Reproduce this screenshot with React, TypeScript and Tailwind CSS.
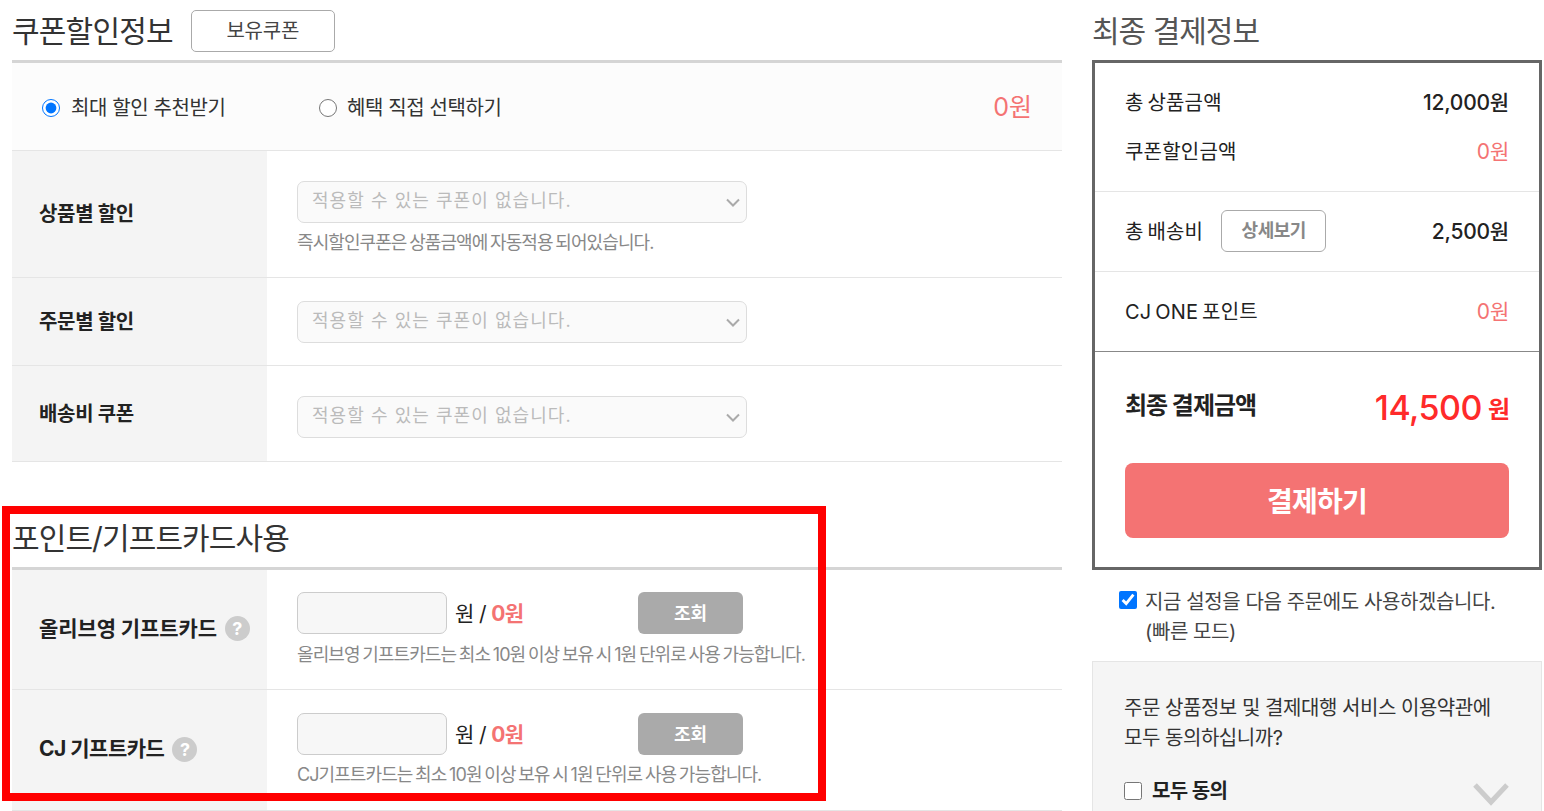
function Won({ children, className = "" }: { children: React.ReactNode; className?: string }) {
  return <span className={`whitespace-nowrap ${className}`}>{children}</span>;
}

const helpText = "text-[18px] leading-[24px] tracking-[-0.92px] [word-spacing:-1.45px] text-[#888888] whitespace-nowrap";

function SelectBox() {
  return (
    <div className="w-[450px] h-[42px] flex items-center justify-between pl-[14px] pr-[6px] bg-[#fafafa] border border-[#dddddd] rounded-[7px] text-[18px] tracking-[1.05px] text-[#bbbbbb]">
      <span className="pb-[3px]">적용할 수 있는 쿠폰이 없습니다.</span>
      <svg width="14" height="9" viewBox="0 0 14 9" fill="none">
        <path d="M1 1.5 L7 7.5 L13 1.5" stroke="#aaaaaa" strokeWidth="2" />
      </svg>
    </div>
  );
}

function CouponRow({ label, height, help, pad }: { label: string; height: string; help?: string; pad: string }) {
  return (
    <div className={`flex border-b border-[#e5e5e5] ${height}`}>
      <div className="w-[255px] shrink-0 bg-[#f4f4f4] pl-[27px] flex items-center text-[20px] font-bold tracking-[-0.3px] text-[#222222]">
        {label}
      </div>
      <div className={`pl-[30px] ${pad}`}>
        <SelectBox />
        {help && <p className={`mt-[8px] ${helpText}`}>{help}</p>}
      </div>
    </div>
  );
}

function HelpDot() {
  return (
    <span className="ml-[8px] w-[25px] h-[25px] rounded-full bg-[#cccccc] text-white text-[18px] font-bold flex items-center justify-center">
      ?
    </span>
  );
}

function GiftRow({ label, help, height, top, helpGap, tracking }: { label: string; help: string; height: string; top: string; helpGap: string; tracking: string }) {
  return (
    <div className={`flex border-b border-[#e5e5e5] ${height}`}>
      <div className={`w-[255px] shrink-0 bg-[#f4f4f4] pl-[27px] pb-[2px] flex items-center text-[21px] font-bold text-[#222222] ${tracking}`}>
        {label}
        <HelpDot />
      </div>
      <div className={`pl-[30px] ${top}`}>
        <div className="flex items-center h-[42px]">
          <div className="w-[150px] h-[42px] bg-[#f7f7f7] border border-[#cccccc] rounded-[7px]" />
          <span className="ml-[8px] w-[183px] pt-[1px] text-[21px] tracking-[-0.6px] text-[#222222]">
            원 / <b className="font-bold text-[#f47373]">0원</b>
          </span>
          <button className="w-[105px] h-[42px] bg-[#aaaaaa] rounded-[6px] text-white text-[18px] font-bold">조회</button>
        </div>
        <p className={`${helpGap} ${helpText}`}>{help}</p>
      </div>
    </div>
  );
}

function SummaryRow({ label, value, red }: { label: string; value: string; red?: boolean }) {
  return (
    <div className="flex items-center justify-between h-[49px] text-[#222222]">
      <span className="text-[20px] tracking-[0.2px] [word-spacing:-2px]">{label}</span>
      <Won className={`text-[21px] tracking-[-0.2px] ${red ? "text-[#f47373]" : "font-medium"}`}>{value}</Won>
    </div>
  );
}

export default function App() {
  return (
    <div className="relative h-[811px] overflow-hidden bg-white font-['Inter','Noto_Sans_CJK_KR',sans-serif]">
      <div className="flex items-start pl-[12px] pr-[2px] gap-[30px]">
        {/* Left column */}
        <div className="w-[1050px] shrink-0">
          <div className="flex items-center h-[60px]">
            <h2 className="pt-[2px] text-[30px] tracking-[-0.8px] text-[#333333]">쿠폰할인정보</h2>
            <button className="ml-[18px] mt-[2px] w-[144px] h-[42px] border border-[#aaaaaa] rounded-[5px] text-[20px] tracking-[-0.2px] text-[#444444]">보유쿠폰</button>
          </div>
          <div className="h-[3px] bg-[#d5d5d5]" />
          <div className="flex items-center justify-between h-[88px] pl-[30px] pr-[30px] pt-[3px] bg-[#fcfcfc] border-b border-[#e5e5e5] text-[20px] tracking-[-0.4px] text-[#333333]">
            <div className="flex items-center">
              <label className="flex items-center w-[277px] gap-[11px]">
                <input type="radio" name="sale" defaultChecked className="w-[18px] h-[18px] m-0" />
                최대 할인 추천받기
              </label>
              <label className="flex items-center gap-[10px]">
                <input type="radio" name="sale" className="w-[18px] h-[18px] m-0" />
                혜택 직접 선택하기
              </label>
            </div>
            <span className="text-[25px] tracking-normal text-[#f47373]">0원</span>
          </div>
          <CouponRow label="상품별 할인" height="h-[127px]" pad="pt-[30px]" help="즉시할인쿠폰은 상품금액에 자동적용 되어있습니다." />
          <CouponRow label="주문별 할인" height="h-[88px]" pad="pt-[23px]" />
          <CouponRow label="배송비 쿠폰" height="h-[96px]" pad="pt-[30px]" />

          <h2 className="mt-[52px] h-[53px] pb-[4px] flex items-center text-[30px] tracking-[-0.9px] text-[#333333]">포인트/기프트카드사용</h2>
          <div className="h-[3px] bg-[#d5d5d5]" />
          <GiftRow label="올리브영 기프트카드" height="h-[120px]" top="pt-[22px]" helpGap="mt-[9px]" tracking="tracking-[-0.1px]" help="올리브영 기프트카드는 최소 10원 이상 보유 시 1원 단위로 사용 가능합니다." />
          <GiftRow label="CJ 기프트카드" height="h-[121px]" top="pt-[23px]" helpGap="mt-[8px]" tracking="tracking-[-0.5px]" help="CJ기프트카드는 최소 10원 이상 보유 시 1원 단위로 사용 가능합니다." />
        </div>

        {/* Right column */}
        <div className="w-[450px] shrink-0">
          <h2 className="h-[60px] pt-[2px] flex items-center text-[30px] tracking-[-1px] text-[#555555]">최종 결제정보</h2>
          <div className="h-[510px] border-[3px] border-[#666666]">
            <div className="h-[129px] px-[30px] pt-[15px] border-b border-[#e5e5e5]">
              <SummaryRow label="총 상품금액" value="12,000원" />
              <SummaryRow label="쿠폰할인금액" value="0원" red />
            </div>
            <div className="h-[80px] px-[30px] flex items-center justify-between border-b border-[#e5e5e5] text-[#222222]">
              <div className="flex items-center">
                <span className="text-[20px] tracking-[0.2px] [word-spacing:-2px]">총 배송비</span>
                <button className="ml-[18px] mb-[2px] w-[105px] h-[42px] border border-[#aaaaaa] rounded-[6px] text-[18px] tracking-[-0.5px] font-bold text-[#888888]">상세보기</button>
              </div>
              <Won className="text-[21px] tracking-[-0.2px] font-medium">2,500원</Won>
            </div>
            <div className="h-[80px] px-[30px] flex items-center justify-between border-b border-[#888888] text-[#222222]">
              <span className="text-[20px] tracking-[0.2px] [word-spacing:-2px]">CJ ONE 포인트</span>
              <Won className="text-[21px] tracking-[-0.2px] text-[#f47373]">0원</Won>
            </div>
            <div className="px-[30px]">
              <div className="flex items-center justify-between h-[111px]">
                <span className="mb-[4px] text-[24px] font-bold tracking-[-1px] text-[#222222]">최종 결제금액</span>
                <Won className="text-[#ff2a2a] font-medium -mr-[1px]">
                  <span className="text-[34px] tracking-[-0.5px]">14,500</span>
                  <span className="ml-[6px] text-[24px] font-bold align-[2px]">원</span>
                </Won>
              </div>
              <button className="w-full h-[75px] pt-[2px] bg-[#f47373] rounded-[8px] text-white text-[28px] font-bold tracking-[-0.7px]">결제하기</button>
            </div>
          </div>

          <label className="flex items-start mt-[17px] pl-[27px] text-[20px] leading-[30px] tracking-[-0.4px] text-[#444444]">
            <input type="checkbox" defaultChecked className="w-[18px] h-[18px] mt-[4px] shrink-0" />
            <span className="ml-[8px]">
              지금 설정을 다음 주문에도 사용하겠습니다.
              <br />
              (빠른 모드)
            </span>
          </label>

          <div className="mt-[14px] h-[200px] bg-[#f5f5f5] border border-[#e5e5e5] pl-[31px] pr-[31px] pt-[31px]">
            <p className="text-[20px] leading-[30px] tracking-[-0.46px] text-[#333333]">
              주문 상품정보 및 결제대행 서비스 이용약관에
              <br />
              모두 동의하십니까?
            </p>
            <div className="flex items-center justify-between mt-[23px]">
              <label className="flex items-center text-[20px] font-bold tracking-[-0.6px] text-[#222222]">
                <input type="checkbox" className="w-[18px] h-[18px] m-0" />
                <span className="ml-[10px]">모두 동의</span>
              </label>
              <svg width="38" height="24" viewBox="0 0 38 24" fill="none" className="mt-[6px]">
                <path d="M3 3 L19 20 L35 3" stroke="#cccccc" strokeWidth="5" />
              </svg>
            </div>
          </div>
        </div>
      </div>

      {/* Red annotation box drawn over the screenshot */}
      <div className="absolute left-[2px] top-[506px] w-[824px] h-[295px] border-[8px] border-[#ff0000] pointer-events-none" />
    </div>
  );
}
